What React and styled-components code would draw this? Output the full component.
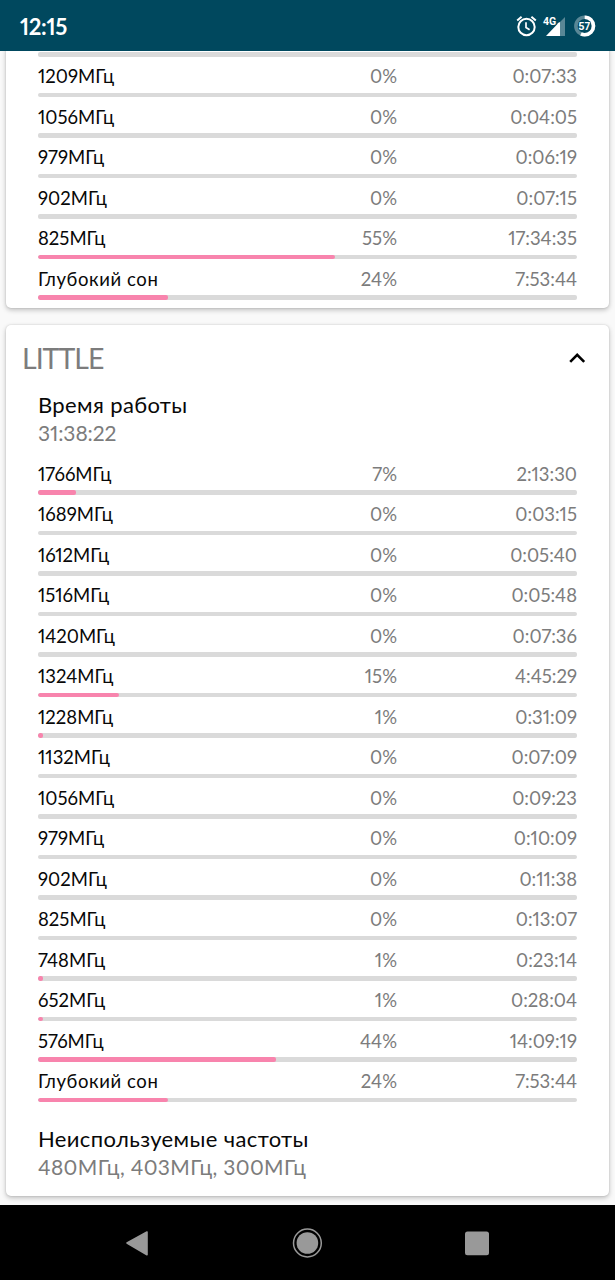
import React from "react";
import styled, { createGlobalStyle } from "styled-components";

const GlobalStyle = createGlobalStyle`
  *, *::before, *::after { box-sizing: border-box; }
  body {
    margin: 0;
    background: #000;
    font-family: Lato, "Open Sans", sans-serif;
    font-feature-settings: "pnum" 1, "lnum" 1;
  }
`;

const Screen = styled.div`
  display: flex;
  flex-direction: column;
  width: 615px;
  height: 1280px;
  overflow: hidden;
`;

const StatusBar = styled.header`
  display: flex;
  align-items: center;
  justify-content: space-between;
  flex: none;
  height: 51px;
  padding: 1px 19px 0 20px;
  background: #00485e;
  color: #fff;
`;

const Clock = styled.span`
  font-size: 22px;
  font-weight: 700;
  letter-spacing: -0.3px;
`;

const StatusIcons = styled.svg`
  display: block;
  width: 80px;
  height: 30px;
`;

const Content = styled.main`
  display: flex;
  flex-direction: column;
  gap: 16.5px;
  height: 1154px;
  flex: none;
  padding: 0 6px;
  overflow: hidden;
  background: #f9f9f9;
`;

const Card = styled.section`
  flex: none;
  height: ${(p) => p.$height}px;
  margin-top: ${(p) => p.$shift || 0}px;
  padding: ${(p) => p.$top || 0}px 32px 0;
  border-radius: 5px;
  background: #fff;
  box-shadow: 0 2px 5px rgba(0, 0, 0, 0.24), 0 0 2px rgba(0, 0, 0, 0.14);
`;

const CardHeader = styled.div`
  display: flex;
  align-items: center;
  justify-content: space-between;
  height: 67px;
  margin: 0 -9px 0 -16px;
`;

const CardTitle = styled.h2`
  margin: 0;
  font-size: 28.5px;
  font-weight: 400;
  line-height: 34px;
  letter-spacing: -1px;
  color: #7c7c7c;
`;

const Chevron = styled.svg`
  width: 18px;
  height: 12px;
`;

const Info = styled.div`
  height: ${(p) => p.$height}px;
  padding-top: ${(p) => p.$top || 0}px;
`;

const InfoTitle = styled.div`
  margin-top: -1px;
  font-size: 22px;
  line-height: 28px;
  color: #080808;
  letter-spacing: 0.38px;
  white-space: nowrap;
`;

const InfoValue = styled.div`
  font-size: 21px;
  line-height: 27px;
  color: #7c7c7c;
  letter-spacing: ${(p) => p.$track || 0}px;
  white-space: nowrap;
`;

const Row = styled.div`
  height: 40.5px;
`;

const RowText = styled.div`
  display: grid;
  grid-template-columns: 200px 159px 180px;
  align-items: center;
  height: 36px;
  padding-top: 3px;
  font-size: 18.5px;
  white-space: nowrap;
`;

const Label = styled.span`
  color: #080808;
  letter-spacing: ${(p) => (p.$wide ? 0.6 : 0)}px;
`;

const Figure = styled.span`
  color: #7c7c7c;
  text-align: right;
`;

const Track = styled.div`
  height: 4.5px;
  border-radius: 2px;
  background: #dadada;
  overflow: hidden;
`;

const Fill = styled.div`
  width: ${(p) => p.$value * 1.003}%;
  height: 100%;
  border-radius: 2px;
  background: #f884ad;
`;

const NavBar = styled.nav`
  flex: none;
  height: 75px;
  background: #000;
`;

const NavIcons = styled.svg`
  display: block;
  width: 615px;
  height: 75px;
`;

const bigCluster = [
  ["1209МГц", 0, "0:07:33"],
  ["1056МГц", 0, "0:04:05"],
  ["979МГц", 0, "0:06:19"],
  ["902МГц", 0, "0:07:15"],
  ["825МГц", 55, "17:34:35"],
  ["Глубокий сон", 24, "7:53:44"],
];

const littleCluster = [
  ["1766МГц", 7, "2:13:30"],
  ["1689МГц", 0, "0:03:15"],
  ["1612МГц", 0, "0:05:40"],
  ["1516МГц", 0, "0:05:48"],
  ["1420МГц", 0, "0:07:36"],
  ["1324МГц", 15, "4:45:29"],
  ["1228МГц", 1, "0:31:09"],
  ["1132МГц", 0, "0:07:09"],
  ["1056МГц", 0, "0:09:23"],
  ["979МГц", 0, "0:10:09"],
  ["902МГц", 0, "0:11:38"],
  ["825МГц", 0, "0:13:07"],
  ["748МГц", 1, "0:23:14"],
  ["652МГц", 1, "0:28:04"],
  ["576МГц", 44, "14:09:19"],
  ["Глубокий сон", 24, "7:53:44"],
];

const Frequency = ({ label, percent, time }) => (
  <Row>
    <RowText>
      <Label $wide={!/^\d/.test(label)}>{label}</Label>
      <Figure>{percent}%</Figure>
      <Figure>{time}</Figure>
    </RowText>
    <Track>
      <Fill $value={percent} />
    </Track>
  </Row>
);

const FrequencyList = ({ items }) =>
  items.map(([label, percent, time]) => (
    <Frequency key={label} label={label} percent={percent} time={time} />
  ));

export default function App() {
  return (
    <Screen>
      <GlobalStyle />
      <StatusBar>
        <Clock>12:15</Clock>
        <StatusIcons viewBox="516 11 80 30">
          <g fill="none" stroke="#fff" strokeWidth="2">
            <circle cx="526.5" cy="27" r="8.2" />
            <path d="M526 22.3v5.2l3.6 2.2" strokeWidth="1.7" />
            <path d="M517.2 20.6l4.4-3.8M535.8 20.6l-4.4-3.8" />
          </g>
          <path d="M565 17v19h-5V22z" fill="#fff" opacity=".35" />
          <path d="M546 36l11-11.5 1-1.5 2-1V36z" fill="#fff" />
          <text x="543" y="24.5" fontSize="10.5" fontWeight="700" fill="#fff" fontFamily="Roboto, sans-serif">4G</text>
          <g fill="none" strokeWidth="3.6">
            <circle cx="584.7" cy="26" r="8.8" stroke="#fff" opacity=".35" />
            <circle cx="584.7" cy="26" r="8.8" stroke="#fff" pathLength="100" strokeDasharray="57 43" transform="rotate(-90 584.7 26)" />
          </g>
          <text x="584.3" y="29.8" textAnchor="middle" fontSize="10.8" fontWeight="700" fill="#fff" stroke="#00485e" strokeWidth="1.2" paintOrder="stroke" fontFamily="Roboto, sans-serif">57</text>
        </StatusIcons>
      </StatusBar>
      <Content>
        <Card $height={263} $shift={-6} $top={7.4}>
          <Track />
          <FrequencyList items={bigCluster} />
        </Card>
        <Card $height={871.5}>
          <CardHeader>
            <CardTitle>LITTLE</CardTitle>
            <Chevron viewBox="568 352 18 12">
              <path d="M570.2 361.8l7-7 7 7" fill="none" stroke="#000" strokeWidth="2.6" />
            </Chevron>
          </CardHeader>
          <Info $height={62.5} $top={0.1}>
            <InfoTitle>Время работы</InfoTitle>
            <InfoValue $track={-0.1}>31:38:22</InfoValue>
          </Info>
          <FrequencyList items={littleCluster} />
          <Info $height={90} $top={24}>
            <InfoTitle>Неиспользуемые частоты</InfoTitle>
            <InfoValue $track={0.36}>480МГц, 403МГц, 300МГц</InfoValue>
          </Info>
        </Card>
      </Content>
      <NavBar>
        <NavIcons viewBox="0 1205 615 75">
          <path d="M127 1243L147 1232V1254.8z" fill="#999" stroke="#999" strokeWidth="1.6" strokeLinejoin="round" />
          <circle cx="307.4" cy="1243" r="10.8" fill="#999" />
          <circle cx="307.4" cy="1243" r="13.9" fill="none" stroke="#999" strokeWidth="1.5" />
          <rect x="465" y="1231.5" width="24" height="23.8" rx="2.5" fill="#999" />
        </NavIcons>
      </NavBar>
    </Screen>
  );
}
